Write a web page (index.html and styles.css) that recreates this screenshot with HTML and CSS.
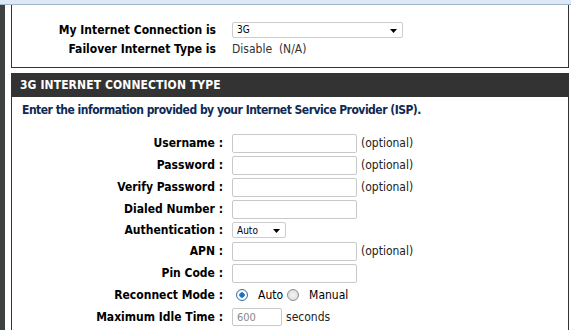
FILE: index.html
```html
<!DOCTYPE html>
<html lang="en">
<head>
  <meta charset="UTF-8" />
  <title>3G Internet Connection</title>
  <link rel="stylesheet" href="styles.css">
</head>
<body>
  <div class="topbar"></div>
  <div class="page">
    <div class="side"></div>
    <div class="main">
      <div class="box conn-box">
        <div class="conn-row">
          <div class="conn-label">My Internet Connection is</div>
          <div class="select-wrap wide">
            <select class="select">
              <option>3G</option>
            </select>
            <svg class="caret" width="7" height="4" viewBox="0 0 7 4"><path d="M0 0h7L3.5 4z" fill="#000"/></svg>
          </div>
        </div>
        <div class="conn-row">
          <div class="conn-label">Failover Internet Type is</div>
          <div class="value">Disable &nbsp;(N/A)</div>
        </div>
      </div>

      <div class="section-title">3G INTERNET CONNECTION TYPE</div>
      <div class="box form-box">
        <div class="intro">Enter the information provided by your Internet Service Provider (ISP).</div>
        <div class="form">
          <div class="row">
            <label class="label">Username :</label>
            <input class="text" type="text">
            <span class="note">(optional)</span>
          </div>
          <div class="row">
            <label class="label">Password :</label>
            <input class="text" type="password">
            <span class="note">(optional)</span>
          </div>
          <div class="row">
            <label class="label">Verify Password :</label>
            <input class="text" type="password">
            <span class="note">(optional)</span>
          </div>
          <div class="row">
            <label class="label">Dialed Number :</label>
            <input class="text" type="text">
          </div>
          <div class="row short">
            <label class="label">Authentication :</label>
            <div class="select-wrap small">
              <select class="select">
                <option>Auto</option>
              </select>
              <svg class="caret" width="7" height="4" viewBox="0 0 7 4"><path d="M0 0h7L3.5 4z" fill="#000"/></svg>
            </div>
          </div>
          <div class="row">
            <label class="label">APN :</label>
            <input class="text" type="text">
            <span class="note">(optional)</span>
          </div>
          <div class="row">
            <label class="label">Pin Code :</label>
            <input class="text" type="text">
          </div>
          <div class="row">
            <label class="label">Reconnect Mode :</label>
            <div class="radios">
              <input class="radio" type="radio" name="mode" checked>
              <span class="radio-text">Auto</span>
              <input class="radio" type="radio" name="mode">
              <span class="radio-text">Manual</span>
            </div>
          </div>
          <div class="row">
            <label class="label">Maximum Idle Time :</label>
            <input class="text idle" type="text" value="600">
            <span class="note unit">seconds</span>
          </div>
          <div class="row">
            <label class="label"></label>
            <input class="text" type="text">
          </div>
        </div>
      </div>
    </div>
  </div>
</body>
</html>
```

FILE: styles.css
```css
html, body {
  margin: 0;
  padding: 0;
  background-color: #fff;
  font-family: 'DejaVu Sans Condensed', 'DejaVu Sans', sans-serif;
  font-size: 12px;
  color: #000;
  height: 330px;
  overflow: hidden;
}
.topbar {
  height: 4px;
  background-color: #dce8f6;
  border-bottom: 1px solid #a2b7ce;
}
.page {
  display: flex;
  height: 325px;
}
.side {
  width: 5px;
  background-color: #3e4242;
}
.main {
  flex: 1;
  padding: 0 2px 0 6px;
}
.box {
  border: 1px solid #333;
  border-top: none;
}
.conn-box {
  padding: 15px 0 9px;
}
.conn-row {
  display: flex;
  align-items: center;
  height: 19px;
}
.conn-label {
  width: 204px;
  text-align: right;
  font-weight: bold;
  margin-right: 16px;
}
.value {
  color: #333;
}
.select-wrap {
  position: relative;
  height: 16px;
}
.select-wrap.wide {
  width: 171px;
}
.select-wrap.small {
  width: 54px;
}
.select {
  -webkit-appearance: none;
  appearance: none;
  width: 100%;
  height: 16px;
  margin: 0;
  padding: 0 0 0 4px;
  border: 1px solid #cdcdcd;
  border-radius: 2px;
  background-color: #fff;
  font-family: inherit;
  font-size: 10px;
  color: #000;
  outline: none;
}
.caret {
  position: absolute;
  right: 6px;
  top: 7px;
}
.section-title {
  margin-top: 5px;
  height: 24px;
  line-height: 24px;
  padding-left: 9px;
  background-color: #333;
  color: #fff;
  font-weight: bold;
  letter-spacing: 0.1px;
}
.form-box {
  border-bottom: none;
  height: 240px;
}
.intro {
  padding: 6px 10px 0;
  line-height: 14px;
  font-weight: bold;
  letter-spacing: -0.5px;
  color: #0d2a55;
}
.form {
  padding-top: 15px;
}
.row {
  display: flex;
  align-items: center;
  height: 22px;
}
.row.short {
  height: 20px;
}
.label {
  width: 211px;
  margin-right: 9px;
  text-align: right;
  font-weight: bold;
}
.text {
  box-sizing: border-box;
  width: 125px;
  height: 19px;
  margin: 0;
  padding: 0 4px;
  border: 1px solid #c9c9c9;
  border-radius: 2px;
  font-family: inherit;
  font-size: 11px;
  outline: none;
}
.text.idle {
  width: 50px;
  height: 18px;
  color: #888;
}
.note {
  margin-left: 4px;
  color: #222;
}
.radios {
  display: flex;
  align-items: center;
  padding-left: 4px;
}
.radio {
  -webkit-appearance: none;
  appearance: none;
  width: 12px;
  height: 12px;
  margin: 0;
  border: 1px solid #8c8c8c;
  border-radius: 50%;
  background: radial-gradient(circle, #f4f4f4 0%, #d6d6d6 100%);
  box-sizing: border-box;
}
.radio:checked {
  border-color: #3f6e9a;
  background: radial-gradient(circle, #1f5fa0 0, #2f7fcf 2.5px, #fff 3px, #cfe3f5 100%);
}
.radio-text {
  margin: 0 4px 0 10px;
}
```
